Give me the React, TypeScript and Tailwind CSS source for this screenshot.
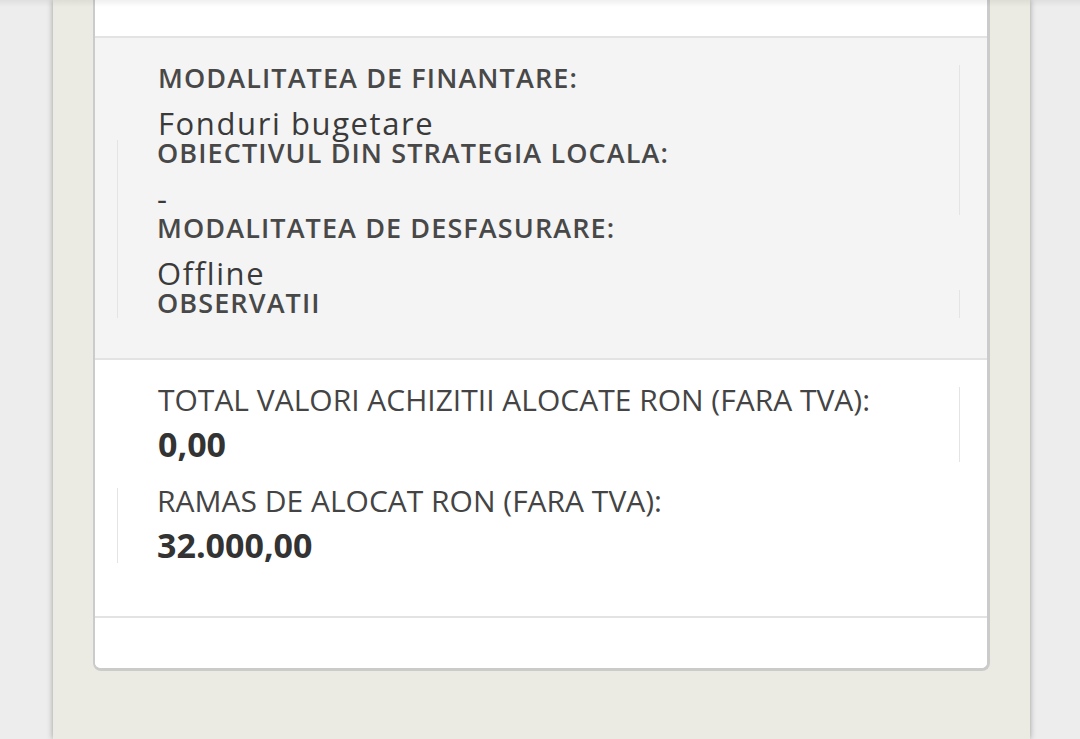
import React from 'react';

type Field = {
  label: string;
  value: string;
  lineLeft?: boolean;
  lineRight?: boolean;
  short?: boolean;
};

const fundingFields: Field[] = [
  { label: 'MODALITATEA DE FINANTARE:', value: 'Fonduri bugetare', lineRight: true },
  { label: 'OBIECTIVUL DIN STRATEGIA LOCALA:', value: '-', lineLeft: true, lineRight: true },
  { label: 'MODALITATEA DE DESFASURARE:', value: 'Offline', lineLeft: true },
  { label: 'OBSERVATII', value: '', lineLeft: true, lineRight: true, short: true },
];

const totals: Field[] = [
  { label: 'TOTAL VALORI ACHIZITII ALOCATE RON (FARA TVA):', value: '0,00', lineRight: true },
  { label: 'RAMAS DE ALOCAT RON (FARA TVA):', value: '32.000,00', lineLeft: true },
];

function InfoBlock({ field }: { field: Field }) {
  return (
    <div
      className={`border-l border-r ${field.lineLeft ? 'border-l-[#e4e4e4] pl-[39px]' : 'border-l-transparent pl-[40px]'} ${
        field.lineRight ? 'border-r-[#e4e4e4]' : 'border-r-transparent'
      } ${field.short ? 'h-[28px]' : 'h-[75px]'}`}
    >
      <p className="text-[27px] leading-[26px] font-semibold tracking-[1.1px] text-[#484848] whitespace-nowrap">{field.label}</p>
      {field.value && (
        <p className="mt-[12px] text-[31px] leading-[40px] tracking-[1.6px] text-[#3a3a3a] whitespace-nowrap">{field.value}</p>
      )}
    </div>
  );
}

function TotalBlock({ field }: { field: Field }) {
  return (
    <div
      className={`h-[75px] border-l border-r ${field.lineLeft ? 'border-l-[#e4e4e4] pl-[39px]' : 'border-l-transparent pl-[40px]'} ${
        field.lineRight ? 'border-r-[#e4e4e4]' : 'border-r-transparent'
      }`}
    >
      <p className="text-[30px] leading-[26px] text-[#444444] whitespace-nowrap">{field.label}</p>
      <p className="mt-[11px] text-[34px] leading-[40px] font-bold text-[#333333] whitespace-nowrap">{field.value}</p>
    </div>
  );
}

export default function App() {
  return (
    <div className="relative w-full h-[739px] overflow-hidden bg-[#ededed] font-['Open_Sans',sans-serif]">
      <div className="ml-[53px] w-[977px] h-full bg-[#ecebe3] shadow-[0_0_6px_rgba(0,0,0,0.35)] px-[40px]">
        <div className="bg-white border-l-2 border-r-[3px] border-b-[3px] border-[#cbcbcb] rounded-b-[8px]">
          <div className="h-[36px] bg-white" />
          <div className="h-[2px] bg-[#e3e3e3]" />

          <div className="bg-[#f4f4f4] pt-[27px] pb-[40px] pl-[22px] pr-[27px]">
            {fundingFields.map(f => (
              <InfoBlock key={f.label} field={f} />
            ))}
          </div>
          <div className="h-[2px] bg-[#e3e3e3]" />

          <div className="bg-white pt-[27px] pb-[53px] pl-[22px] pr-[27px] flex flex-col gap-[26px]">
            {totals.map(f => (
              <TotalBlock key={f.label} field={f} />
            ))}
          </div>
          <div className="h-[2px] bg-[#e3e3e3]" />
          <div className="h-[50px] bg-white rounded-b-[6px]" />
        </div>
      </div>
      {/* shadow from the header above */}
      <div className="absolute top-0 left-0 right-0 h-[7px] bg-gradient-to-b from-black/[0.06] to-transparent pointer-events-none" />
    </div>
  );
}
